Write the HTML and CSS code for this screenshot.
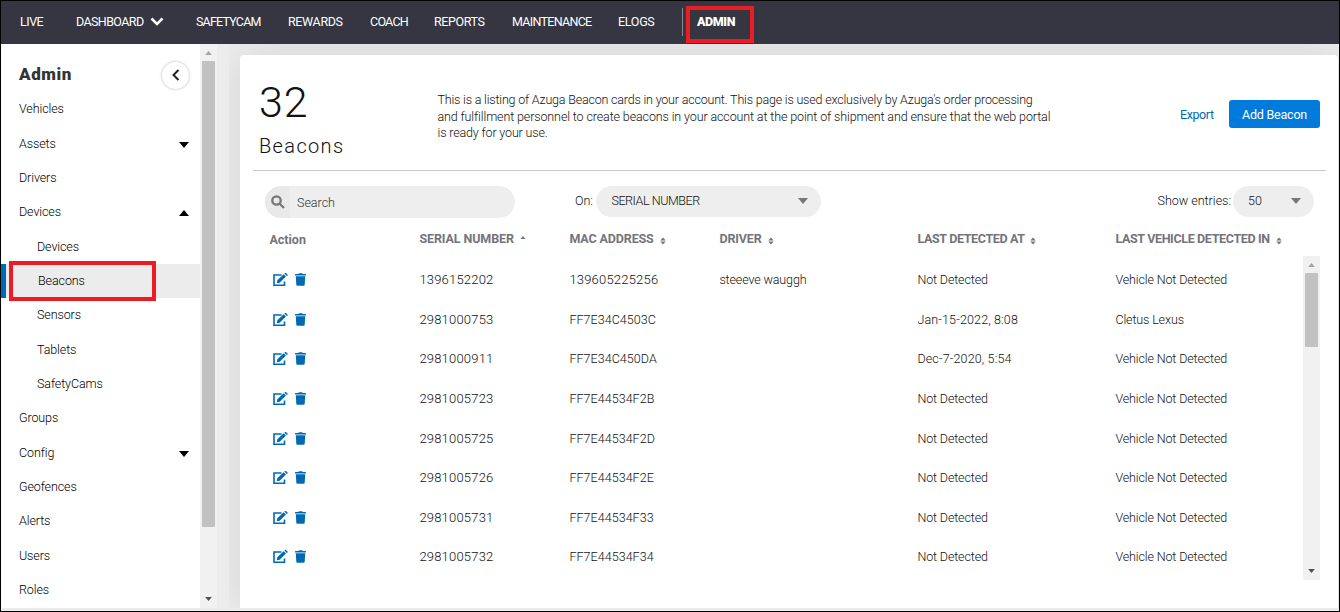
FILE: index.html
```
<!DOCTYPE html>
<html lang="en">
  <head>
    <meta charset="UTF-8" />
    <meta name="viewport" content="width=device-width, initial-scale=1.0" />
    <title>Beacons - Admin</title>
    <link rel="stylesheet" href="styles.css">
  </head>
  <body>
    <!-- Shared icons -->
    <svg class="icon-defs">
      <symbol id="edit" viewBox="0 0 15 13">
        <path d="M8.500 2H1V12.300H11.500V8.500" fill="none" stroke="#0069b4" stroke-width="1.600" />
        <path d="M4.300 7.200L10.600 1.200L13 3.500L6.700 9.700L3.800 10.200zM11.300 0.600L12 0Q12.600-.3 13.200.2L14.500 1.400Q15 2 14.500 2.500L13.700 3.100z" />
      </symbol>
      <symbol id="trash" viewBox="0 0 448 512">
        <path d="M432 32H312l-9-19A24 24 0 0 0 281 0H166a24 24 0 0 0-21 13l-9 19H16A16 16 0 0 0 0 48v32a16 16 0 0 0 16 16h416a16 16 0 0 0 16-16V48a16 16 0 0 0-16-16zM32 128h384l-21 339a48 48 0 0 1-48 45H101a48 48 0 0 1-48-45z" />
      </symbol>
      <symbol id="sort" viewBox="0 0 6 9">
        <path d="M0 4L3 0.500L6 4zM0 5L3 8.500L6 5z" />
      </symbol>
      <symbol id="down" viewBox="0 0 10 6">
        <path d="M0 0H10L5 6z" />
      </symbol>
      <symbol id="up" viewBox="0 0 10 6">
        <path d="M0 6H10L5 0z" />
      </symbol>
    </svg>

    <div class="app">
      <nav class="topnav">
        <a class="live">LIVE</a>
        <a class="dashboard">DASHBOARD
          <svg class="chevron" viewBox="0 0 14 9"><path d="M1.500 1.500L7 7L12.500 1.500" /></svg>
        </a>
        <a class="safetycam">SAFETYCAM</a>
        <a class="rewards">REWARDS</a>
        <a class="coach">COACH</a>
        <a class="reports">REPORTS</a>
        <a class="maintenance">MAINTENANCE</a>
        <a class="elogs">ELOGS</a>
        <a class="admin marked">ADMIN</a>
      </nav>

      <div class="body">
        <aside class="sidebar">
          <div class="menu">
            <div class="menu-head">
              <h2>Admin</h2>
              <button class="collapse"><svg viewBox="0 0 8 12"><path d="M6.500 1L1.500 6L6.500 11" /></svg></button>
            </div>
            <ul>
              <li>Vehicles</li>
              <li>Assets <svg class="caret"><use href="#down" /></svg></li>
              <li>Drivers</li>
              <li>Devices <svg class="caret"><use href="#up" /></svg></li>
              <li class="sub">Devices</li>
              <li class="sub active marked">Beacons</li>
              <li class="sub">Sensors</li>
              <li class="sub">Tablets</li>
              <li class="sub">SafetyCams</li>
              <li>Groups</li>
              <li>Config <svg class="caret"><use href="#down" /></svg></li>
              <li>Geofences</li>
              <li>Alerts</li>
              <li>Users</li>
              <li>Roles</li>
            </ul>
          </div>
          <div class="scrollbar">
            <svg class="arrow-up"><use href="#up" /></svg>
            <div class="thumb"></div>
            <svg class="arrow-down"><use href="#down" /></svg>
          </div>
        </aside>

        <div class="content">
          <main class="card">
            <header class="summary">
              <div class="count">
                <strong>32</strong>
                <h1>Beacons</h1>
              </div>
              <p>
                <span class="line1">This is a listing of Azuga Beacon cards in your account. This page is used exclusively by Azuga's order processing</span><br />
                <span class="line2">and fulfillment personnel to create beacons in your account at the point of shipment and ensure that the web portal</span><br />
                <span class="line3">is ready for your use.</span>
              </p>
              <a class="export">Export</a>
              <button class="add">Add Beacon</button>
            </header>

            <div class="filters">
              <div class="search">
                <span class="search-icon"><svg viewBox="0 0 14 14"><circle cx="5.500" cy="5.500" r="4.200" /><path d="M8.700 8.700L13 13" /></svg></span>
                <span class="placeholder">Search</span>
              </div>
              <label class="on">On:</label>
              <div class="select field">SERIAL NUMBER <svg><use href="#down" /></svg></div>
              <label class="entries">Show entries:</label>
              <div class="select size">50 <svg><use href="#down" /></svg></div>
            </div>

            <div class="row head">
              <span class="action">Action</span>
              <span class="h-serial">SERIAL NUMBER <svg class="asc"><use href="#up" /></svg></span>
              <span class="h-mac">MAC ADDRESS <svg class="sort"><use href="#sort" /></svg></span>
              <span>DRIVER <svg class="sort"><use href="#sort" /></svg></span>
              <span class="h-last">LAST DETECTED AT <svg class="sort"><use href="#sort" /></svg></span>
              <span class="h-last">LAST VEHICLE DETECTED IN <svg class="sort"><use href="#sort" /></svg></span>
            </div>

            <div class="table">
              <div class="rows">
                <div class="row">
                  <span class="icons"><svg class="edit"><use href="#edit" /></svg><svg class="trash"><use href="#trash" /></svg></span>
                  <span class="num">1396152202</span><span class="num">139605225256</span><span>steeeve wauggh</span><span>Not Detected</span><span>Vehicle Not Detected</span>
                </div>
                <div class="row">
                  <span class="icons"><svg class="edit"><use href="#edit" /></svg><svg class="trash"><use href="#trash" /></svg></span>
                  <span class="num">2981000753</span><span class="mac">FF7E34C4503C</span><span></span><span class="date">Jan-15-2022, 8:08</span><span>Cletus Lexus</span>
                </div>
                <div class="row">
                  <span class="icons"><svg class="edit"><use href="#edit" /></svg><svg class="trash"><use href="#trash" /></svg></span>
                  <span class="num">2981000911</span><span class="mac">FF7E34C450DA</span><span></span><span class="date">Dec-7-2020, 5:54</span><span>Vehicle Not Detected</span>
                </div>
                <div class="row">
                  <span class="icons"><svg class="edit"><use href="#edit" /></svg><svg class="trash"><use href="#trash" /></svg></span>
                  <span class="num">2981005723</span><span class="mac">FF7E44534F2B</span><span></span><span>Not Detected</span><span>Vehicle Not Detected</span>
                </div>
                <div class="row">
                  <span class="icons"><svg class="edit"><use href="#edit" /></svg><svg class="trash"><use href="#trash" /></svg></span>
                  <span class="num">2981005725</span><span class="mac">FF7E44534F2D</span><span></span><span>Not Detected</span><span>Vehicle Not Detected</span>
                </div>
                <div class="row">
                  <span class="icons"><svg class="edit"><use href="#edit" /></svg><svg class="trash"><use href="#trash" /></svg></span>
                  <span class="num">2981005726</span><span class="mac">FF7E44534F2E</span><span></span><span>Not Detected</span><span>Vehicle Not Detected</span>
                </div>
                <div class="row">
                  <span class="icons"><svg class="edit"><use href="#edit" /></svg><svg class="trash"><use href="#trash" /></svg></span>
                  <span class="num">2981005731</span><span class="mac">FF7E44534F33</span><span></span><span>Not Detected</span><span>Vehicle Not Detected</span>
                </div>
                <div class="row">
                  <span class="icons"><svg class="edit"><use href="#edit" /></svg><svg class="trash"><use href="#trash" /></svg></span>
                  <span class="num">2981005732</span><span class="mac">FF7E44534F34</span><span></span><span>Not Detected</span><span>Vehicle Not Detected</span>
                </div>
              </div>
              <div class="scrollbar">
                <svg class="arrow-up"><use href="#up" /></svg>
                <div class="thumb"></div>
                <svg class="arrow-down"><use href="#down" /></svg>
              </div>
            </div>
          </main>
        </div>
      </div>
    </div>
  </body>
</html>
```
FILE: styles.css
```
*,
*::after {
  box-sizing: border-box;
}
body {
  margin: 0;
  font-family: Roboto, "Liberation Sans", sans-serif;
  font-size: 12.5px;
  font-weight: 300;
  color: #111;
  overflow: hidden;
}
h1,
h2,
p,
ul {
  margin: 0;
  padding: 0;
}
button {
  font: inherit;
  padding: 0;
  border: none;
}
.icon-defs {
  position: absolute;
  width: 0;
  height: 0;
}
.app {
  width: 1340px;
  height: 612px;
  border: 1px solid #000;
  background: #ececec;
  display: flex;
  flex-direction: column;
}

/* Top navigation */
.topnav {
  flex: 0 0 43px;
  display: flex;
  padding-left: 19px;
  background: #353641;
  color: #fff;
  font-weight: 400;
  line-height: 42px;
  letter-spacing: -0.5px;
  white-space: nowrap;
}
.live {
  width: 56px;
}
.dashboard {
  width: 120px;
  letter-spacing: -0.6px;
}
.chevron {
  width: 14px;
  height: 9px;
  margin-left: 4px;
  fill: none;
  stroke: #fff;
  stroke-width: 2.6;
}
.safetycam {
  width: 92px;
  letter-spacing: -0.8px;
}
.rewards {
  width: 82px;
  letter-spacing: -0.35px;
}
.coach {
  width: 64px;
  letter-spacing: -0.75px;
}
.reports {
  width: 78px;
  letter-spacing: -0.4px;
}
.maintenance {
  width: 106px;
  letter-spacing: -0.7px;
}
.elogs {
  width: 64px;
  letter-spacing: -0.3px;
}
.admin {
  height: 28px;
  margin-top: 7px;
  padding-left: 14px;
  line-height: 28px;
  font-weight: 900;
  letter-spacing: -0.4px;
  border-left: 1px solid #85868d;
}

/* Red call-out frames */
.marked {
  position: relative;
}
.marked::after {
  content: "";
  position: absolute;
  border: 4px solid #ed1c24;
}
.admin.marked::after {
  left: 3px;
  top: -2px;
  width: 68px;
  height: 37px;
}
.active.marked::after {
  left: 3px;
  top: -3px;
  width: 147px;
  height: 40px;
}

/* Sidebar */
.body {
  display: flex;
  height: 564px;
}
.sidebar {
  display: flex;
  width: 216px;
  height: 564px;
  background: #fff;
}
.menu {
  width: 199px;
  overflow: hidden;
}
.menu-head {
  display: flex;
  justify-content: space-between;
  height: 47.8px;
  padding: 17px 11px 0 18px;
}
.menu-head h2 {
  font-size: 17px;
  line-height: 27px;
  font-weight: 900;
  color: #333;
  letter-spacing: 0.6px;
}
.collapse {
  width: 27px;
  height: 27px;
  margin-top: 1px;
  border-radius: 50%;
  background: #fff;
  box-shadow: 0 0 3px rgba(0, 0, 0, 0.3);
}
.collapse svg {
  width: 8px;
  height: 12px;
  margin-top: 2px;
  fill: none;
  stroke: #222;
  stroke-width: 2;
}
.menu ul {
  list-style: none;
}
.menu li {
  display: flex;
  align-items: center;
  justify-content: space-between;
  height: 34.35px;
  padding: 0 11px 0.6px 18px;
  color: #000;
  letter-spacing: -0.1px;
}
.menu .sub {
  padding-left: 36px;
}
.menu .active {
  padding-left: 32px;
  background: #ececec;
  border-left: 5px solid #0069b4;
}
.caret {
  width: 10px;
  height: 6px;
  margin-top: 3px;
  fill: #000;
}
.scrollbar {
  display: flex;
  flex-direction: column;
  align-items: center;
  width: 17px;
  background: #f1f1f1;
}
.arrow-up,
.arrow-down {
  flex: none;
  width: 7px;
  height: 4px;
}
.arrow-up {
  margin: 7px 0 6px;
  fill: #a3a3a3;
}
.arrow-down {
  margin: auto 0 7px;
  fill: #505050;
}
.thumb {
  width: 13px;
  height: 466px;
  background: #c1c1c1;
}

/* Beacon list */
.content {
  width: 1110px;
  margin-left: 12px;
  padding: 11px 1px 0 11px;
  overflow: hidden;
}
.card {
  width: 1098px;
  height: 553px;
  padding-left: 13px;
  background: #fff;
  border-radius: 4px 4px 0 0;
  box-shadow: 0 0 40px rgba(0, 0, 0, 0.1);
}
.summary {
  display: flex;
  width: 1073px;
  height: 116px;
  border-bottom: 1px solid #c8c8c8;
}
.count {
  width: 184.5px;
  padding: 23px 0 0 6px;
}
.count strong {
  display: block;
  font-size: 43px;
  line-height: 48px;
  font-weight: 300;
  letter-spacing: 0.9px;
}
.count h1 {
  font-size: 20px;
  line-height: 24px;
  margin-top: 8px;
  font-weight: 300;
  letter-spacing: 1.35px;
}
.summary p {
  width: 742.5px;
  padding-top: 37px;
  line-height: 16.7px;
  white-space: nowrap;
}
.line1 {
  letter-spacing: -0.19px;
}
.line2 {
  letter-spacing: -0.12px;
}
.line3 {
  letter-spacing: -0.15px;
}
.export {
  width: 49px;
  padding-top: 52px;
  color: #0069b4;
  font-weight: 400;
  letter-spacing: -0.4px;
}
.add {
  width: 91px;
  height: 28px;
  margin-top: 45px;
  border-radius: 3px;
  background: #007bdc;
  color: #fff;
  font-weight: 400;
  letter-spacing: -0.2px;
}
.filters {
  display: flex;
  height: 49px;
  padding: 15px 0 0 12px;
  line-height: 30px;
}
.search {
  display: flex;
  width: 250px;
  height: 32px;
  border-radius: 16px;
  background: #eee;
  overflow: hidden;
  color: #333;
}
.search-icon {
  width: 25px;
  background: #e9e9e9;
  padding: 1px 0 0 6px;
}
.search-icon svg {
  width: 14px;
  height: 14px;
  vertical-align: -3px;
  fill: none;
  stroke: #777;
  stroke-width: 2.3;
}
.placeholder {
  padding: 2px 0 0 7px;
}
.on {
  width: 21px;
  margin-left: 60px;
}
.select {
  display: flex;
  align-items: center;
  justify-content: space-between;
  height: 31px;
  border-radius: 16px;
  background: #eee;
}
.select svg {
  width: 10px;
  height: 6px;
  fill: #777;
}
.field {
  width: 225px;
  padding: 0 13px 1px 15.5px;
  letter-spacing: -0.45px;
}
.entries {
  width: 75.5px;
  margin-left: 336.5px;
}
.size {
  width: 81px;
  padding: 0 13px 1px 15px;
}
.row {
  display: grid;
  grid-template-columns: 150px 150px 150px 198px 198px auto;
  align-items: center;
  height: 39.6px;
  padding-left: 16.4px;
  white-space: nowrap;
  letter-spacing: -0.13px;
}
.num {
  font-size: 13px;
  letter-spacing: 0.2px;
}
.mac {
  letter-spacing: 0.05px;
}
.date {
  letter-spacing: 0.15px;
}
.head {
  height: 37px;
  padding-bottom: 1px;
  color: #73747c;
  font-weight: 700;
}
.h-serial {
  letter-spacing: -0.1px;
}
.h-last {
  letter-spacing: -0.35px;
}
.action {
  padding-top: 2px;
  letter-spacing: 0;
}
.asc {
  width: 6px;
  height: 3px;
  margin: 0 0 4px 3px;
  fill: #73747c;
}
.sort {
  width: 6px;
  height: 8px;
  margin-left: 3px;
  vertical-align: -2px;
  fill: #73747c;
}
.table {
  display: flex;
  height: 324px;
  margin-top: -1px;
}
.rows {
  width: 1050px;
  padding-top: 4px;
}
.table .thumb {
  height: 74px;
}
.icons {
  display: flex;
  gap: 7px;
  padding-left: 4px;
  fill: #0069b4;
}
.edit {
  width: 15px;
  height: 13px;
}
.trash {
  width: 11px;
  height: 13px;
}
```
